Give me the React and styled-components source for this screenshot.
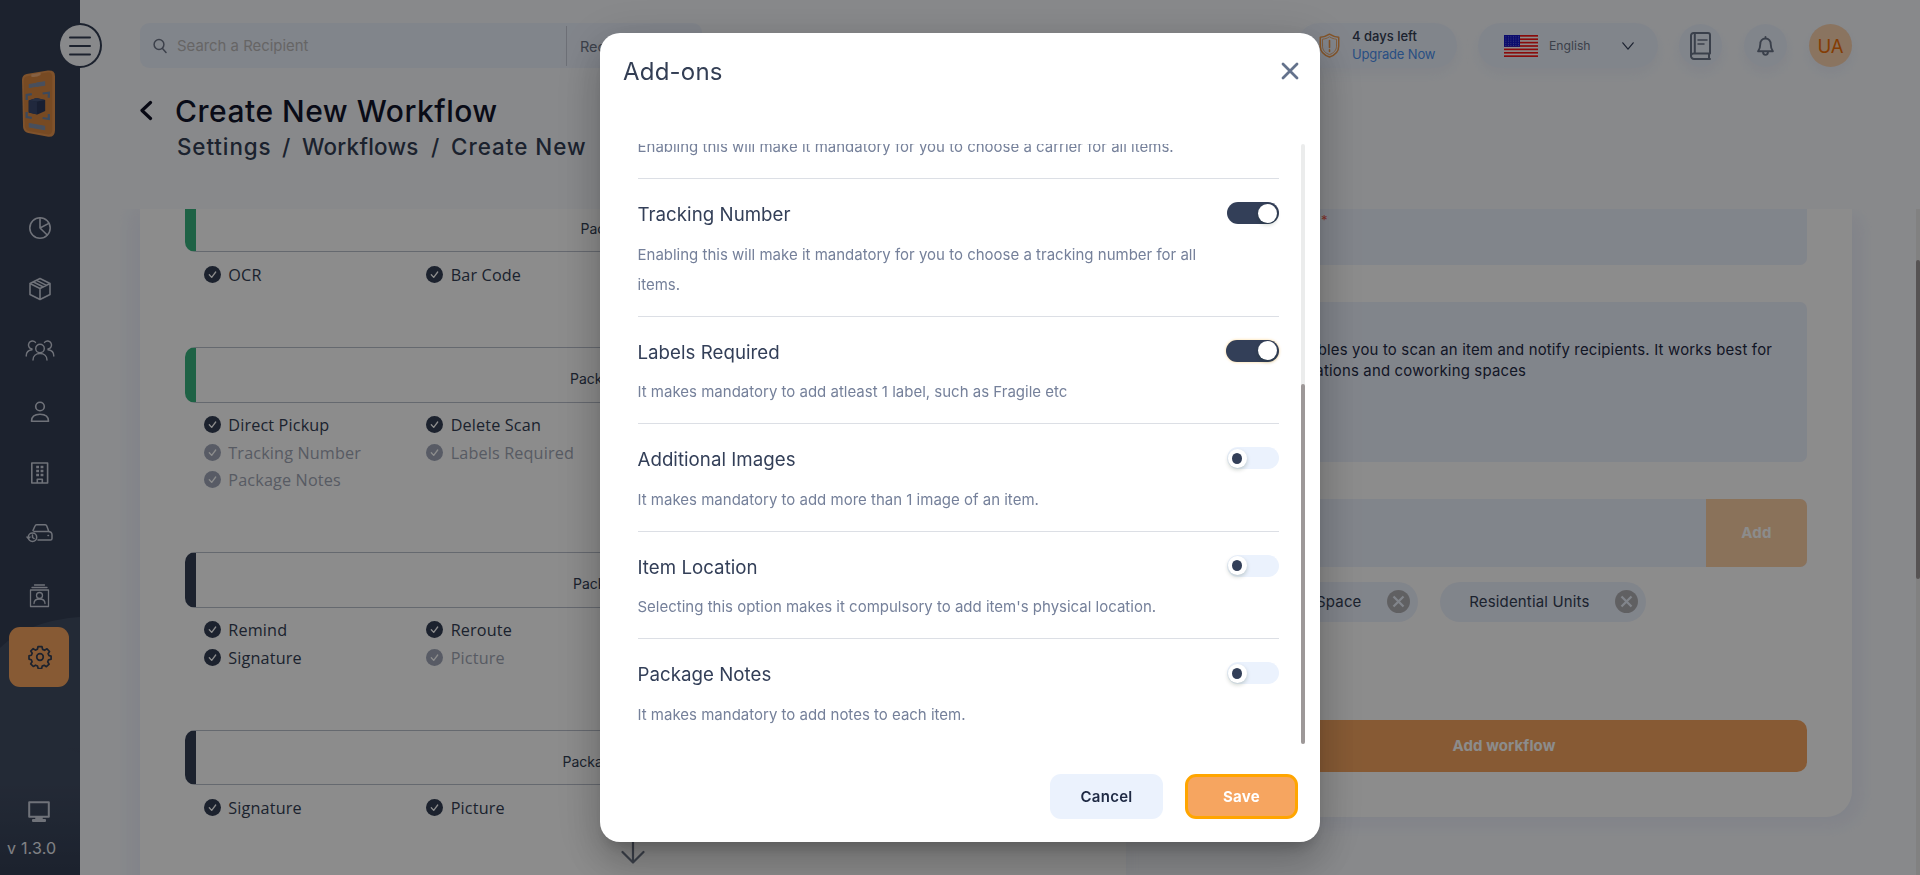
import React from "react";
import styled, { createGlobalStyle } from "styled-components";

const Global = createGlobalStyle`
  * { box-sizing: border-box; }
  body { margin: 0; overflow: hidden; font-family: Inter, "Liberation Sans", sans-serif; color: #333f58; }
  button { font-family: inherit; border: 0; padding: 0; cursor: pointer; background: none; }
  svg { display: block; flex: none; }
  p, h1, h2, h3 { margin: 0; font-weight: 400; }
`;

const Page = styled.div`
  display: flex;
  width: 1920px;
  height: 875px;
  overflow: hidden;
  background: #f8fafe;
`;

/* ---------- sidebar ---------- */
const Sidebar = styled.aside`
  position: relative;
  flex: none;
  width: 80px;
  height: 875px;
  background: #333e54;
  display: flex;
  flex-direction: column;
  align-items: center;
`;
const SidebarWave = styled.svg`
  position: absolute;
  left: 0;
  bottom: 0;
`;
const MenuToggle = styled.button`
  position: absolute;
  left: 58px;
  top: 23px;
  width: 44px;
  height: 45px;
  border-radius: 50%;
  background: #f8fafe;
  border: 2px solid #333e54;
  display: flex;
  align-items: center;
  justify-content: center;
`;
const Logo = styled.div`
  margin-top: 69.5px;
  height: 128px;
  padding-right: 3px;
`;
const NavItem = styled.a`
  position: relative;
  flex: none;
  width: 60px;
  height: 60px;
  margin-bottom: 1.36px;
  margin-right: 2px;
  border-radius: 11px;
  display: flex;
  align-items: center;
  justify-content: center;
  padding-left: 1px;
  color: ${(p) => (p.$active ? "#333e54" : "#cbd0dd")};
  background: ${(p) => (p.$active ? "#f6a560" : "transparent")};
`;
const SidebarFoot = styled.div`
  position: relative;
  margin-top: auto;
  width: 100%;
  padding: 0 0 15px 7px;
  color: #e8ebf2;
  font-size: 16px;
  letter-spacing: 0.2px;
  line-height: 24px;
  svg { margin: 0 0 14px 21px; color: #cbd0dd; }
`;

/* ---------- header ---------- */
const Main = styled.main`
  flex: 1;
  min-width: 0;
  display: flex;
  flex-direction: column;
`;
const Header = styled.header`
  height: 68px;
  padding: 23px 68px 0 60px;
  display: flex;
  justify-content: space-between;
`;
const SearchBar = styled.div`
  width: 562px;
  height: 45px;
  border-radius: 9px;
  background: #ecf2fe;
  display: flex;
  align-items: center;
  padding-left: 13px;
  color: #6d7688;
`;
const SearchText = styled.span`
  margin-left: 10px;
  width: 389px;
  font-size: 14.9px;
  color: #bbb9b9;
`;
const SearchType = styled.div`
  height: 40px;
  line-height: 41px;
  border-left: 1px solid #c6cbd8;
  padding-left: 13px;
  font-size: 14.5px;
  color: #6d7688;
`;
const HeaderTools = styled.div`
  display: flex;
  align-items: center;
  height: 45px;
`;
const Pill = styled.div`
  display: flex;
  align-items: center;
  height: 45px;
  border-radius: 23px;
  background: #ecf2fe;
  width: ${(p) => p.$w}px;
  padding-left: ${(p) => p.$pad}px;
  margin-right: 21px;
  box-shadow: 0 6px 14px rgba(190, 205, 235, 0.18);
`;
const Trial = styled.div`
  margin-left: 12px;
  padding-bottom: 2px;
  font-size: 13px;
  line-height: 18px;
  div { font-weight: 500; color: #333e54; }
  a { color: #4a90ee; letter-spacing: -0.15px; }
`;
const Language = styled.span`
  margin: 0 31px 0 11px;
  font-size: 12.2px;
  color: #6d7688;
`;
const RoundButton = styled.button`
  width: 43px;
  height: 43px;
  margin-left: ${(p) => p.$gap || 0}px;
  border-radius: 50%;
  display: flex;
  align-items: center;
  justify-content: center;
  font-size: 18.5px;
  color: ${(p) => (p.$accent ? "#f07008" : "#6b7689")};
  background: ${(p) => (p.$accent ? "#fbd3b0" : "#ecf2fe")};
  box-shadow: 0 6px 14px rgba(190, 205, 235, 0.2);
`;

/* ---------- title ---------- */
const TitleRow = styled.div`
  display: flex;
  padding: 23px 0 0 60px;
  height: 141px;
`;
const BackIcon = styled.div`
  padding-top: 9px;
  width: 35px;
`;
const PageTitle = styled.h1`
  font-weight: 500;
  font-size: 30px;
  line-height: 41px;
  letter-spacing: 0.5px;
  color: #12152b;
`;
const Crumbs = styled.div`
  display: flex;
  padding-left: 2px;
  font-weight: 500;
  font-size: 22.4px;
  line-height: 30px;
  color: #333e54;
`;
const Crumb = styled.span`
  width: ${(p) => p.$w}px;
  letter-spacing: ${(p) => p.$ls}px;
`;

/* ---------- body ---------- */
const ScrollArea = styled.div`
  height: 666px;
  overflow: hidden;
  display: flex;
  align-items: flex-start;
  padding-left: 60px;
`;
const FlowPanel = styled.section`
  width: 986px;
  height: 760px;
  background: #fff;
  padding-left: 45px;
  box-shadow: -8px 0 18px rgba(200, 210, 240, 0.28);
`;
const Step = styled.div`
  margin-top: ${(p) => (p.$first ? -12 : 0)}px;
  width: 896px;
`;
const StepBox = styled.div`
  height: 55.4px;
  border: 1px solid #b9bfcb;
  border-left: 11px solid ${(p) => p.$color};
  border-radius: 10px;
  text-align: center;
  padding-right: 12px;
  font-size: 14px;
  line-height: 62px;
  color: #333e54;
`;
const StepLabel = styled.span`
  display: inline-block;
  width: ${(p) => p.$w}px;
  text-align: left;
  white-space: nowrap;
`;
const Checks = styled.div`
  display: grid;
  grid-template-columns: 222.4px 222.4px;
  grid-auto-rows: 27.3px;
  padding: 8.6px 0 0 19px;
`;
const CheckItem = styled.div`
  display: flex;
  align-items: center;
  gap: 7.3px;
  font-family: "Open Sans", "Noto Sans", sans-serif;
  font-size: 16.2px;
  letter-spacing: 0.15px;
  color: ${(p) => (p.$off ? "#9fa6b5" : "#333e54")};
  span { padding-top: 1px; }
`;
const FlowArrow = styled.div`
  height: 59px;
  padding-top: 3px;
  display: flex;
  justify-content: center;
  color: #6d7688;
`;
const FormPanel = styled.section`
  width: 726px;
  height: 608px;
  background: #fff;
  border-radius: 0 0 26px 0;
  padding: 0 45px 45px 75px;
  display: flex;
  flex-direction: column;
  box-shadow: 8px 8px 18px rgba(200, 210, 240, 0.28);
`;
const Field = styled.div`
  height: ${(p) => p.$h}px;
  margin-bottom: ${(p) => p.$mb}px;
  border-radius: ${(p) => (p.$cut ? "0 0 7px 7px" : "7px")};
  background: #ecf2fe;
  overflow: hidden;
  display: flex;
  justify-content: space-between;
`;
const Required = styled.span`
  padding-left: 120px;
  font-size: 13px;
  line-height: 23px;
  color: #ef5a4c;
`;
const Description = styled.p`
  padding: 38px 0 0 20px;
  font-size: 14.9px;
  line-height: 21px;
  letter-spacing: 0.2px;
  white-space: nowrap;
  color: #1f2a44;
`;
const AddButton = styled.button`
  width: 101px;
  height: 100%;
  background: #fccfa4;
  color: #fff;
  font-weight: 700;
  font-size: 15px;
  letter-spacing: 0.2px;
`;
const Chips = styled.div`
  display: flex;
  gap: 22px;
`;
const Chip = styled.div`
  width: ${(p) => p.$w}px;
  height: 40px;
  border-radius: 20px;
  background: #ecf2fe;
  display: flex;
  align-items: center;
  justify-content: flex-end;
  gap: 25px;
  padding-right: 8.5px;
  font-size: 15px;
  letter-spacing: 0.15px;
  color: #333e54;
`;
const SubmitButton = styled.button`
  margin-top: 98px;
  height: 52px;
  border-radius: 10px;
  background: #f6a560;
  color: #fff;
  font-weight: 700;
  font-size: 15px;
  letter-spacing: 0.1px;
`;
const PageScroll = styled.div`
  margin-left: auto;
  width: 4px;
  height: 666px;
  padding-top: 51px;
  background: #ececec;
  div { height: 319px; border-radius: 4px; background: #9d9898; }
`;

/* ---------- modal ---------- */
const Overlay = styled.div`
  position: fixed;
  inset: 0;
  background: rgba(0, 0, 0, 0.45);
  display: flex;
  justify-content: center;
  align-items: center;
`;
const Modal = styled.div`
  width: 720px;
  height: 809px;
  border-radius: 20px;
  background: #fff;
  display: flex;
  flex-direction: column;
  box-shadow: 0 11px 15px -7px rgba(0, 0, 0, 0.2), 0 24px 38px 3px rgba(0, 0, 0, 0.14),
    0 9px 46px 8px rgba(0, 0, 0, 0.12);
`;
const ModalHead = styled.div`
  height: 111px;
  padding: 20px 21px 0 23px;
  display: flex;
  justify-content: space-between;
  h2 { font-size: 24px; line-height: 37px; letter-spacing: 0.2px; color: #333e54; }
  svg { margin-top: 9px; }
`;
const ModalBody = styled.div`
  height: 600px;
  padding: 0 15px 0 37.5px;
  overflow: hidden;
  display: flex;
  justify-content: space-between;
`;
const AddonList = styled.div`
  width: 641px;
  margin-top: -72.5px;
`;
const Addon = styled.div`
  padding: 19.5px 0 16px;
  border-bottom: ${(p) => (p.$last ? 0 : 1)}px solid #dcdfe5;
`;
const AddonTop = styled.div`
  display: flex;
  justify-content: space-between;
  align-items: center;
  height: 31px;
  h3 { font-size: 18.7px; letter-spacing: 0.03px; line-height: 30px; padding-top: 2px; color: #333f58; }
`;
const AddonText = styled.p`
  margin-top: 10px;
  width: 570px;
  font-size: 15px;
  line-height: 30px;
  color: #75809a;
`;
const Switch = styled.button`
  width: ${(p) => (p.$focus ? 53 : 52)}px;
  height: 22px;
  margin-bottom: 2px;
  border-radius: 11px;
  display: flex;
  align-items: center;
  justify-content: ${(p) => (p.$on ? "flex-end" : "flex-start")};
  padding: 0 2px 0 1px;
  background: ${(p) => (p.$on ? "#333f58" : "#ebf2fd")};
  box-shadow: ${(p) => (p.$focus ? "0 0 3px rgba(255,165,0,.45)" : "none")};
`;
const Knob = styled.span`
  width: 19px;
  height: 19px;
  border-radius: 50%;
  background: #fff;
  display: flex;
  align-items: center;
  justify-content: center;
  box-shadow: 0 2px 4px rgba(0, 35, 11, 0.2);
  &::after {
    content: "";
    width: 10px;
    height: 11px;
    border-radius: 50%;
    background: ${(p) => (p.$on ? "#fff" : "#333f58")};
  }
`;
const ModalScroll = styled.div`
  width: 4px;
  height: 600px;
  padding-top: 240px;
  border-radius: 4px;
  background: #ebecec;
  div { height: 360px; border-radius: 4px; background: #9d9898; }
`;
const ModalFoot = styled.div`
  display: flex;
  justify-content: flex-end;
  gap: 22px;
  padding: 30px 22px 0 0;
`;
const FootButton = styled.button`
  width: 113px;
  height: 45px;
  border-radius: 11px;
  font-weight: ${(p) => (p.$primary ? 700 : 600)};
  font-size: 15px;
  letter-spacing: 0.3px;
  background: ${(p) => (p.$primary ? "#f6a560" : "#ebf2fd")};
  color: ${(p) => (p.$primary ? "#fff" : "#1f2a44")};
  border: ${(p) => (p.$primary ? "3px solid #ffa500" : "0")};
`;

/* ---------- icons ---------- */
const Ico = ({ w = 24, h = 24, vb, sw = 1.6, children }) => (
  <svg width={w} height={h} viewBox={vb || `0 0 ${w} ${h}`} fill="none" stroke="currentColor" strokeWidth={sw} strokeLinecap="round" strokeLinejoin="round">
    {children}
  </svg>
);
const PieIcon = () => (
  <Ico><circle cx="12" cy="12" r="10.2" /><path d="M12 2v10l8.8-4.6M12 12l7.2 7" /></Ico>
);
const BoxIcon = () => (
  <Ico><path d="M12 1.5l10 5v11l-10 5-10-5v-11zM2 6.5l10 5 10-5M12 11.5v11M5.5 5l10 5M8.5 3.4l10 5" /></Ico>
);
const PeopleIcon = () => (
  <Ico w={30} h={22} sw={1.4}>
    <circle cx="15" cy="9.5" r="4.3" /><path d="M8 21c0-4 3-6.5 7-6.5s7 2.5 7 6.5" />
    <path d="M10.5 3.4A4 4 0 1 0 7 10M19.5 3.4A4 4 0 1 1 23 10M1.2 17c0-3.5 2-5.800 5.800-6.200M28.800 17c0-3.500-2-5.800-5.800-6.200" />
  </Ico>
);
const PersonIcon = () => (
  <Ico><circle cx="12" cy="6.5" r="4.3" /><path d="M3.500 21.200c0-4.500 3.400-7 8.500-7s8.500 2.500 8.500 7z" /></Ico>
);
const BuildingIcon = () => (
  <Ico>
    <path d="M3.800 2h15.800v20H3.800zM9.300 22v-3.800h5V22" strokeWidth="1.6" />
    <path d="M9.600 4.800v10.400M14 4.800v10.400" strokeWidth="2.800" strokeDasharray="2.500 1.500" strokeLinecap="butt" />
  </Ico>
);
const CarIcon = () => (
  <Ico w={28} h={22} sw={1.5}>
    <path d="M7 7.500l2-4.500c.3-.8.8-1.200 1.600-1.200h8.600c.8 0 1.300.4 1.600 1.200l2 5.500M8 8.500h14c2.500 0 4 1.500 4 3.500v3.500c0 1-.6 1.600-1.600 1.600H12" />
    <circle cx="6.500" cy="14.300" r="4.200" /><path d="M6.500 12v2.500l1.500 1M1 14l1.400 1.500L4 14M22 12.500h.5" />
  </Ico>
);
const ContactIcon = () => (
  <Ico sw={1.3}>
    <path d="M2.500 6h18v16.500h-18zM4 3.500h15M6.500 1h10M6 19.500c0-3.200 2-4.500 5.500-4.500s5.500 1.300 5.500 4.500" /><circle cx="11.500" cy="11.500" r="3" />
  </Ico>
);
const GearIcon = () => (
  <Ico sw={1.7}>
    <circle cx="12" cy="12" r="3.300" />
    <path d="M10 1.700h4l.6 2.700 2 .9 2.400-1.500 2.500 2.700-1.400 2.200.9 2 2.100.5v3l-2.600.7-.8 2 1.400 2.300-2.700 2.500-2.200-1.400-2 .8-.6 2.400h-3.400l-.7-2.500-2-.8-2.200 1.300-2.600-2.600 1.400-2.200-.8-2-2.300-.6v-3.300l2.400-.6.8-2-1.400-2.200L5.200 3.700l2.200 1.400 2-.8z" />
  </Ico>
);
const MonitorIcon = () => (
  <Ico w={22} h={21} sw={2}><path d="M1.200 1.200h19.600v14.600H1.200z" /><path d="M5 19h12v1H5zM8 17h6" /></Ico>
);
const PhoneLogo = () => (
  <svg width="35" height="68" viewBox="0 0 34 68" preserveAspectRatio="none">
    <path d="M1 10Q1 5 5.500 4L26 .6Q33 0 33 6V60Q33 67.500 26.500 66.800L7 63Q2.500 62 2 57Z" fill="#e8964f" />
    <path d="M2.500 11Q2.500 7 6 6.200L26 2.300Q30.500 2 30.500 7V60Q30 65 26 64.600L8 61.200Q4 60 3.600 56Z" fill="#d98741" />
    <path d="M10 4.500l9-1.800v2.200q-4 2.600-9 1.800z" fill="#f3b07a" />
    <path d="M8 14.500l6-1v3l-6 1zM15 13l8-1.200v3.500L15 16.500zM8 53.500l15 2.700v3.600L8 57z" fill="#8391aa" stroke="#8391aa" strokeWidth="1" strokeLinejoin="round" />
    <path d="M5.500 30v-5l5-.8M21 23.500l6-.8v5M5.500 42v5l5 .8M27 44v5l-6-1" fill="none" stroke="#6d86a8" strokeWidth="2.200" />
    <path d="M7.500 30.500L15 28l8.500 2v11L16 44.500l-8.500-2z" fill="#2c3a5c" />
    <path d="M7.500 30.500L15 28l8.500 2-8 1.500z" fill="#46567c" />
    <path d="M7.500 30.500l8 1v13l-8-2z" fill="#3b4a70" />
  </svg>
);
const Check = ({ off }) => (
  <svg width="17" height="17" viewBox="0 0 17 17">
    <circle cx="8.5" cy="8.5" r="8.5" fill={off ? "#a0a7b9" : "#333e54"} />
    <path d="M5.300 8.800l2.400 2.600 4-5.400" fill="none" stroke="#fff" strokeWidth="1.3" strokeLinecap="round" strokeLinejoin="round" />
  </svg>
);
const Flag = () => (
  <svg width="34" height="22" viewBox="0 0 34 22">
    <rect width="34" height="22" fill="#fff" />
    {[0, 1, 2, 3, 4, 5, 6].map((i) => <rect key={i} y={i * 3.385} width="34" height="1.7" fill="#fa1414" />)}
    <rect width="16" height="11.8" fill="#1616c8" />
    {[1.8, 4, 6.2, 8.4, 10.4].map((y) => (
      <path key={y} d={`M1.500 ${y}h14`} stroke="#9aa0ee" strokeWidth=".8" strokeDasharray=".8 1.7" />
    ))}
  </svg>
);
const ShieldIcon = () => (
  <svg width="21" height="25" viewBox="0 0 21 25" fill="none" stroke="#f09a4a" strokeLinejoin="round">
    <path d="M10.500 1.200C13.500 3.200 16.500 4 19.700 4.200v9c0 5-3.500 8.800-9.200 10.800C4.800 22 1.300 18.200 1.300 13.200v-9C4.500 4 7.500 3.200 10.500 1.200z" strokeWidth="1.5" />
    <path d="M10.500 3.800c2.400 1.500 4.600 2.200 7 2.400v7c0 4-2.600 6.700-7 8.400-4.400-1.700-7-4.400-7-8.400v-7c2.400-.2 4.600-.9 7-2.400z" strokeWidth=".8" />
    <path d="M10.500 7.500v7M10.500 16.800v1.600" strokeWidth="1.6" strokeLinecap="round" />
  </svg>
);
const CloseDot = () => (
  <svg width="23" height="23" viewBox="0 0 23 23">
    <circle cx="11.5" cy="11.5" r="11.5" fill="#b0b0b3" />
    <path d="M6.500 6.500l10 10M16.500 6.500l-10 10" stroke="#ecf2fe" strokeWidth="2.2" />
  </svg>
);

const NAV = [PieIcon, BoxIcon, PeopleIcon, PersonIcon, BuildingIcon, CarIcon, ContactIcon, GearIcon];
const GREEN = "#37b37e";
const NAVY = "#333e54";
const STEPS = [
  { label: "Package Scan", w: 103, color: GREEN, checks: [["OCR"], ["Bar Code"]] },
  { label: "Package Received", w: 124, color: GREEN, checks: [["Direct Pickup"], ["Delete Scan"], ["Tracking Number", 1], ["Labels Required", 1], ["Package Notes", 1]] },
  { label: "Package Pending", w: 118, color: NAVY, checks: [["Remind"], ["Reroute"], ["Signature"], ["Picture", 1]] },
  { label: "Package Delivered", w: 139, color: NAVY, checks: [["Signature"], ["Picture"]] },
];
const ADDONS = [
  { name: "Carrier", text: "Enabling this will make it mandatory for you to choose a carrier for all items.", on: true },
  { name: "Tracking Number", text: "Enabling this will make it mandatory for you to choose a tracking number for all items.", on: true },
  { name: "Labels Required", text: "It makes mandatory to add atleast 1 label, such as Fragile etc", on: true, focus: true },
  { name: "Additional Images", text: "It makes mandatory to add more than 1 image of an item." },
  { name: "Item Location", text: "Selecting this option makes it compulsory to add item's physical location." },
  { name: "Package Notes", text: "It makes mandatory to add notes to each item." },
];

export default function App() {
  return (
    <>
      <Global />
      <Page>
        <Sidebar>
          <SidebarWave width="80" height="265" viewBox="0 610 80 265">
            <defs>
              <linearGradient id="wave" x1="0" y1="0" x2="0" y2="1">
                <stop offset="0" stopColor="#414d63" />
                <stop offset=".5" stopColor="#414d63" />
                <stop offset="1" stopColor="#333e54" />
              </linearGradient>
            </defs>
            <path d="M0 648C20 628 50 619 80 617V875H0Z" fill="url(#wave)" />
            <path d="M0 694C25 722 50 745 80 753V875H0Z" fill="url(#wave)" />
          </SidebarWave>
          <Logo><PhoneLogo /></Logo>
          {NAV.map((Icon, i) => (
            <NavItem key={i} $active={i === 7}><Icon /></NavItem>
          ))}
          <SidebarFoot><MonitorIcon />v 1.3.0</SidebarFoot>
          <MenuToggle>
            <Ico w={22} h={20} sw={2}><path d="M1 1.500h20M1 10h20M1 18.500h20" stroke="#333e54" /></Ico>
          </MenuToggle>
        </Sidebar>
        <Main>
          <Header>
            <SearchBar>
              <Ico w={14} h={16} sw={1.5}><circle cx="6" cy="6.500" r="4.900" /><path d="M9.500 10.500l3.500 4" /></Ico>
              <SearchText>Search a Recipient</SearchText>
              <SearchType>Recipient</SearchType>
            </SearchBar>
            <HeaderTools>
              <Pill $w={160} $pad={22}>
                <ShieldIcon />
                <Trial><div>4 days left</div><a>Upgrade Now</a></Trial>
              </Pill>
              <Pill $w={180} $pad={26}>
                <Flag />
                <Language>English</Language>
                <Ico w={12} h={8} sw={1.2}><path d="M.8.8L6 7.200l5.200-6.400" /></Ico>
              </Pill>
              <RoundButton>
                <Ico w={21} h={28} sw={2}>
                  <path d="M20 21.500V3a2 2 0 0 0-2-2H3.500A2.500 2.500 0 0 0 1 3.500v20.300A3 3 0 0 0 4 27h16M20 21.500H4a2.500 2.500 0 0 0-3 2.300M19 21.500v5M4.800 1v20" />
                  <path d="M8 8h9M8 12h6" strokeWidth="1.5" />
                </Ico>
              </RoundButton>
              <RoundButton $gap={22}>
                <Ico w={17} h={20} sw={1.9}>
                  <path d="M8.500 2.500c-3.300 0-5.200 2.500-5.200 5.500 0 3.600-.8 5.200-2.200 7.200h14.800c-1.400-2-2.200-3.600-2.200-7.200 0-3-1.900-5.500-5.200-5.500zM8.500 1v1.500M6 15.500c0 4.500 5 4.500 5 0" />
                </Ico>
              </RoundButton>
              <RoundButton $gap={22} $accent>UA</RoundButton>
            </HeaderTools>
          </Header>
          <TitleRow>
            <BackIcon>
              <Ico w={13} h={21} sw={3.2}><path d="M10.500 2.500L2 10.500l8.500 8" stroke="#0d1024" /></Ico>
            </BackIcon>
            <div>
              <PageTitle>Create New Workflow</PageTitle>
              <Crumbs>
                <Crumb $w={105} $ls={0.9}>Settings</Crumb>
                <Crumb $w={20} $ls={0}>/</Crumb>
                <Crumb $w={129} $ls={0.25}>Workflows</Crumb>
                <Crumb $w={20} $ls={0}>/</Crumb>
                <Crumb $w={160} $ls={1}>Create New</Crumb>
              </Crumbs>
            </div>
          </TitleRow>
          <ScrollArea>
            <FlowPanel>
              {STEPS.map((s, i) => (
                <Step key={s.label} $first={i === 0}>
                  <StepBox $color={s.color}><StepLabel $w={s.w}>{s.label}</StepLabel></StepBox>
                  <Checks>
                    {s.checks.map(([name, off]) => (
                      <CheckItem key={name} $off={off}><Check off={off} /><span>{name}</span></CheckItem>
                    ))}
                  </Checks>
                  <FlowArrow>
                    <Ico w={24} h={40} sw={2.2}><path d="M12 1v37M1.500 28L12 38.500 22.500 28" /></Ico>
                  </FlowArrow>
                </Step>
              ))}
            </FlowPanel>
            <FormPanel>
              <Field $h={55.7} $mb={37.3} $cut><Required>*</Required></Field>
              <Field $h={160} $mb={37}>
                <Description>
                  This flow enables you to scan an item and notify recipients. It works best for<br />
                  large organizations and coworking spaces
                </Description>
              </Field>
              <Field $h={68} $mb={15}><span /><AddButton>Add</AddButton></Field>
              <Chips>
                <Chip $w={217}>Coworking Space<CloseDot /></Chip>
                <Chip $w={206}>Residential Units<CloseDot /></Chip>
              </Chips>
              <SubmitButton>Add workflow</SubmitButton>
            </FormPanel>
            <PageScroll><div /></PageScroll>
          </ScrollArea>
        </Main>
      </Page>
      <Overlay>
        <Modal>
          <ModalHead>
            <h2>Add-ons</h2>
            <Ico w={18} h={18} sw={2.8}><path d="M2 2l14 14M16 2L2 16" stroke="#64728c" /></Ico>
          </ModalHead>
          <ModalBody>
            <AddonList>
              {ADDONS.map((a, i) => (
                <Addon key={a.name} $last={i === ADDONS.length - 1}>
                  <AddonTop>
                    <h3>{a.name}</h3>
                    <Switch $on={a.on} $focus={a.focus}><Knob $on={a.on} /></Switch>
                  </AddonTop>
                  <AddonText>{a.text}</AddonText>
                </Addon>
              ))}
            </AddonList>
            <ModalScroll><div /></ModalScroll>
          </ModalBody>
          <ModalFoot>
            <FootButton>Cancel</FootButton>
            <FootButton $primary>Save</FootButton>
          </ModalFoot>
        </Modal>
      </Overlay>
    </>
  );
}
